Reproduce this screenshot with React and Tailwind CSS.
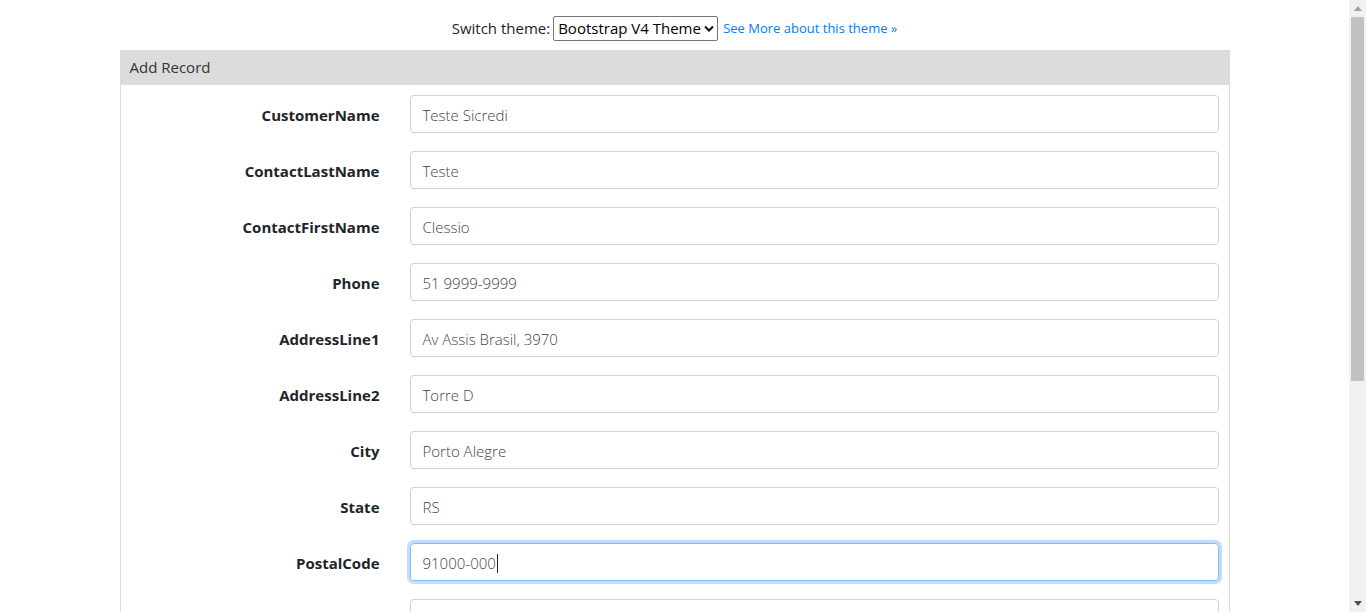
const FIELDS = [
  { label: 'CustomerName', value: 'Teste Sicredi' },
  { label: 'ContactLastName', value: 'Teste' },
  { label: 'ContactFirstName', value: 'Clessio' },
  { label: 'Phone', value: '51 9999-9999' },
  { label: 'AddressLine1', value: 'Av Assis Brasil, 3970' },
  { label: 'AddressLine2', value: 'Torre D' },
  { label: 'City', value: 'Porto Alegre' },
  { label: 'State', value: 'RS' },
  { label: 'PostalCode', value: '91000-000', focused: true },
  { label: '', value: '' },
];

function Field({ label, value, focused }) {
  return (
    <div className="flex items-center shrink-0">
      <label className="w-[249px] shrink-0 text-right font-bold text-[15px] text-[#212529] pt-[2px]">{label}</label>
      <div className="w-[30px] shrink-0" />
      <div
        className={
          focused
            ? 'flex-1 h-[38px] flex items-center px-3 pt-[2px] rounded-[4px] border border-[#80bdff] shadow-[0_0_0_3px_rgba(0,123,255,0.25)] text-[15px] font-light text-[#3f454b]'
            : 'flex-1 h-[38px] flex items-center px-3 pt-[2px] rounded-[4px] border border-[#ced4da] text-[15px] font-light text-[#3f454b]'
        }
      >
        <span>{value}</span>
        {focused && <span className="w-px h-[19px] bg-[#222] ml-px" />}
      </div>
    </div>
  );
}

export default function App() {
  return (
    <div className="flex h-[612px] overflow-hidden bg-white" style={{ fontFamily: '"Open Sans", "Noto Sans", sans-serif' }}>
      <div className="flex-1 flex flex-col min-h-0">
        {/* Theme switcher */}
        <div className="h-[50px] shrink-0 flex items-center justify-center gap-[3px] pt-[6px] text-[15px] text-[#212529]">
          <span>Switch theme:</span>
          <div className="h-[25px] w-[165px] flex items-center justify-between border border-[#767676] rounded-[2px] pl-[4px] pr-[3px] text-[15px] text-black">
            <span>Bootstrap V4 Theme</span>
            <svg width="10" height="7" viewBox="0 0 10 7">
              <path d="M1 1.5 L5 5.5 L9 1.5" fill="none" stroke="#111" strokeWidth="2" />
            </svg>
          </div>
          <a className="text-[13px] text-[#007bff] ml-[2px] mt-[2px]">See More about this theme »</a>
        </div>

        {/* Panel */}
        <div className="w-[1110px] mx-auto flex-1 min-h-0 border-x border-[#dcdcdc] flex flex-col">
          <div className="h-[35px] shrink-0 bg-[#dcdcdc] flex items-center px-[9px] text-[15px] text-[#333]">Add Record</div>
          <div className="flex flex-col gap-[18px] pt-[10px] px-[10px]">
            {FIELDS.map((f, i) => (
              <Field key={i} {...f} />
            ))}
          </div>
        </div>
      </div>

      {/* Scrollbar */}
      <div className="w-[17px] shrink-0 bg-[#f1f1f1] flex flex-col items-center">
        <div className="h-[17px] shrink-0 flex items-center justify-center">
          <svg width="8" height="5" viewBox="0 0 8 5"><path d="M0 5 L4 0 L8 5 Z" fill="#a3a3a3" /></svg>
        </div>
        <div className="w-[13px] h-[364px] shrink-0 bg-[#c1c1c1]" />
        <div className="flex-1" />
        <div className="h-[17px] shrink-0 flex items-center justify-center">
          <svg width="8" height="5" viewBox="0 0 8 5"><path d="M0 0 L4 5 L8 0 Z" fill="#505050" /></svg>
        </div>
      </div>
    </div>
  );
}
